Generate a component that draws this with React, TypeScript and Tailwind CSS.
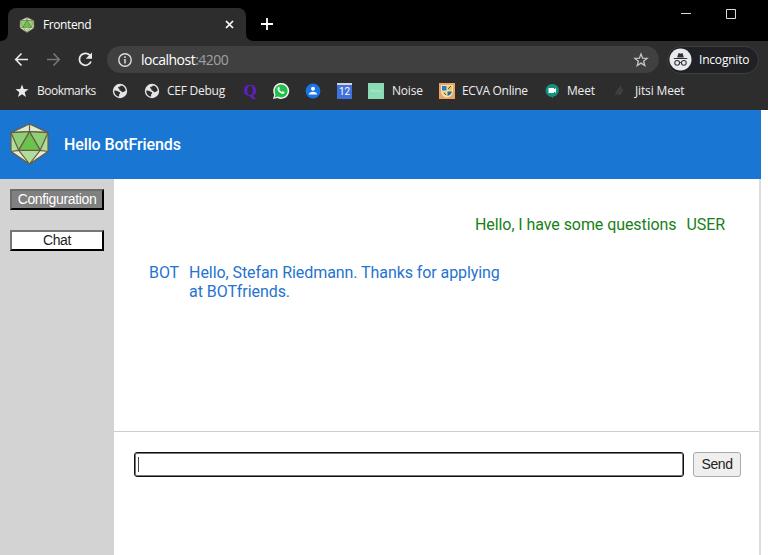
import React from "react";

const Polyhedron = ({ className }: { className: string }) => (
  <svg className={className} viewBox="0 0 39 42" stroke="#6b5b45" strokeWidth="1.2" strokeLinejoin="round">
    <path d="M19.500 1 38 9.700V28.500L19.500 41 1 28.500V9.700Z" fill="#b0de9b" />
    <path d="M19.500 1 38 9.700 19.500 8.700ZM19.500 1 1 9.700 19.500 8.700Z" fill="#dcecd2" />
    <path d="M1 28.500 8.700 27.300 19.500 41ZM38 28.500 30.200 27.300 19.500 41Z" fill="#e0efd8" />
    <path d="M1 9.700 19.500 8.700 8.700 27.300ZM38 9.700 19.500 8.700 30.200 27.300Z" fill="#8fcf77" />
    <path d="M19.500 8.700 30.200 27.300H8.700Z" fill="#6cc24f" />
  </svg>
);

const Globe = () => (
  <svg className="size-4 shrink-0" viewBox="0 0 16 16">
    <circle cx="8" cy="8" r="7.2" fill="#e4e5e7" />
    <path d="M2.300 7.500c1.300 0 3 .1 3.700.8.7.8 2 .4 2.200 1.500.1.900-1.100 1.200-1.100 2v1.800C4.300 13.300 2.100 11 2.300 7.500ZM8.700 2.400c-.1 1-.8 1.300-1.800 1.400-.9.100-1 1.200-.2 1.700.9.500.4 1.700 1.500 2.100 1.300.4 1.300 1.500 2.300 1.600 1.100.1 1.500-1.100 3.100-1.200C13.700 4.900 11.700 2.600 8.700 2.400Z" fill="#2d2d2d" />
  </svg>
);

const Star = () => (
  <svg className="h-4 w-4 shrink-0" viewBox="0 0 16 16">
    <path d="m8 1.600 1.700 4.500 4.800.2-3.800 3 1.300 4.700L8 11.300 4 14l1.300-4.700-3.800-3 4.800-.2Z" fill="#e8eaed" />
  </svg>
);

function TabStrip() {
  return (
    <header className="flex h-[41px] items-start bg-black text-white">
      <div className="flex h-[41px] items-end">
        <svg className="h-2 w-2" viewBox="0 0 8 8"><path d="M8 0v8H0Q8 8 8 0Z" fill="#2d2d2d" /></svg>
        <div className="flex h-[33px] w-[238px] items-center rounded-t-lg bg-[#2d2d2d] pl-[11px] pr-[10px]">
          <Polyhedron className="h-4 w-4" />
          <span className="ml-2 text-[12px] tracking-[-0.4px]">Frontend</span>
          <svg className="ml-auto size-[13px]" viewBox="0 0 13 13"><path d="m3 3 7 7m0-7-7 7" stroke="white" strokeWidth="1.700" /></svg>
        </div>
        <svg className="h-2 w-2" viewBox="0 0 8 8"><path d="M0 0v8h8Q0 8 0 0Z" fill="#2d2d2d" /></svg>
      </div>
      <svg className="ml-[6px] mt-[17px] size-[14px]" viewBox="0 0 14 14"><path d="M7 1v12M1 7h12" stroke="white" strokeWidth="1.800" /></svg>
      <svg className="ml-[406px] mt-2 h-3 w-3" viewBox="0 0 12 12"><path d="M1 5.500h10" stroke="#ddd" /></svg>
      <svg className="ml-[33px] mt-2 h-3 w-3" viewBox="0 0 12 12"><path d="M1.500 1.500h9v9h-9Z" fill="none" stroke="#ddd" /></svg>
    </header>
  );
}

function Toolbar() {
  return (
    <div className="flex h-[37px] items-center pl-3 pr-2">
      <svg className="size-5" viewBox="0 0 20 20"><path d="M16 9.500H4m5.500-6L3.700 9.500l5.800 6" fill="none" stroke="#e8eaed" strokeWidth="1.600" /></svg>
      <svg className="ml-3 size-5" viewBox="0 0 20 20"><path d="M3 9.500h12m-5.500-6 5.800 6-5.800 6" fill="none" stroke="#777" strokeWidth="1.600" /></svg>
      <svg className="ml-[11px] size-5" viewBox="0 0 20 20">
        <path d="M15.300 5.800A6 6 0 1 0 16 11.500" fill="none" stroke="#e8eaed" strokeWidth="1.800" />
        <path d="M17 2.500v6.300h-6.300Z" fill="#e8eaed" />
      </svg>
      <div className="ml-3 flex h-[27px] w-[552px] items-center rounded-full bg-[#404040] pl-[10px] pr-[10px]">
        <svg className="size-4" viewBox="0 0 16 16"><circle cx="8" cy="8" r="6.200" fill="none" stroke="#ddd" strokeWidth="1.400" /><path d="M8 7v4.500M8 4.300v1.600" stroke="#ddd" strokeWidth="1.500" /></svg>
        <span className="ml-[8px] text-[14px] tracking-[-0.5px] text-white">localhost<span className="text-[#9da0a3]">:4200</span></span>
        <svg className="ml-auto size-4" viewBox="0 0 16 16"><path d="m8 2 1.600 4.200 4.500.2-3.500 2.800 1.200 4.300L8 11.100l-3.800 2.400 1.200-4.300-3.500-2.800 4.500-.2Z" fill="none" stroke="#c5c7c9" strokeWidth="1.300" /></svg>
      </div>
      <div className="ml-2 flex h-[28px] w-[92px] items-center rounded-full border border-[#3c3e40] bg-[#202124] pl-px">
        <svg className="size-[23px] shrink-0" viewBox="0 0 24 24">
          <circle cx="12" cy="12" r="11.500" fill="#e8eaed" />
          <path d="M8.500 10 9.800 5.400h1.200l1 .5 1-.5h1.200l1.300 4.600ZM5 10.500h14v1.100H5Z" fill="#303134" />
          <g fill="none" stroke="#303134" strokeWidth="1.100"><circle cx="8.500" cy="15.500" r="2.500" /><circle cx="15.500" cy="15.500" r="2.500" /><path d="M11 15.500q1-.8 2 0" /></g>
        </svg>
        <span className="ml-[7px] text-[12px] tracking-[-0.2px] text-white">Incognito</span>
      </div>
    </div>
  );
}

function Bookmarks() {
  return (
    <nav className="flex h-[32px] items-center pb-[6px] pl-[14px] text-[12px] text-[#eee] [&>span]:shrink-0 [&>span]:whitespace-nowrap [&>svg]:shrink-0">
      <Star />
      <span className="ml-[7px] w-[60px] tracking-[-0.5px]">Bookmarks</span>
      <div className="ml-[15px]"><Globe /></div>
      <div className="ml-4"><Globe /></div>
      <span className="ml-[7px] w-[58px] tracking-[-0.25px]">CEF Debug</span>
      <span className="ml-[17px] w-4 text-center font-['Liberation_Serif',serif] text-[17px] font-bold leading-4 text-[#681bd9]">Q</span>
      <svg className="ml-[14px] size-[18px]" viewBox="0 0 18 18">
        <path d="M1 17 2.200 12.800A8 8 0 1 1 5.300 15.900Z" fill="#f4f4f4" />
        <path d="m2.600 15.400.9-3.200A6.500 6.500 0 1 1 5.900 14.600Z" fill="#20c04b" />
        <path d="M6.200 5.100c.4-.4.9-.3 1.100.2l.6 1.300-.7.900c.7 1.300 1.500 2 2.800 2.600l.8-.9 1.500.8c.4.200.3.700-.1 1.200-1.100 1.200-2.700.7-4.500-.6C5.500 8.900 4.800 6.600 6.200 5.100Z" fill="white" />
      </svg>
      <svg className="ml-[15px] size-4" viewBox="0 0 16 16"><circle cx="8" cy="8" r="7.400" fill="#1a73e8" /><circle cx="8" cy="5.800" r="2" fill="white" /><path d="M3.900 11.600c0-3.800 8.200-3.800 8.200 0Z" fill="white" /></svg>
      <div className="ml-4 h-4 w-[15px] shrink-0 border-t-2 border-[#d4d4d4] bg-[#3f72dc] text-center font-[Roboto,sans-serif] text-[10px] leading-[14px] text-white">12</div>
      <div className="ml-4 flex h-4 w-4 shrink-0 items-center justify-center overflow-hidden bg-[#8bdcb5] text-[4px] text-[#c5eedc]">Noise</div>
      <span className="ml-2 w-[30px] tracking-[-0.2px]">Noise</span>
      <svg className="ml-[17px] size-4" viewBox="0 0 16 16"><path d="M0 0h16v16H0Z" fill="#efa35e" /><path d="M2 2h12v7q-1 5-6 5.500Q3 14 2 9Z" fill="#e8e4c8" /><path d="M3 3h4.500v4.500H3Z" fill="#287cba" /><path d="M8.500 3H13v4.500H8.500Z" fill="#f2c451" /><path d="M3.500 8.500h4V13q-3-1-4-4.500Z" fill="#f3c73f" /><path d="M8.500 8.500H13q-1 3.500-4.500 4.500Z" fill="#286991" /><path d="m9 6 3-3M5 10l2 2" stroke="#555" /></svg>
      <span className="ml-[7px] w-[66px] tracking-[-0.3px]">ECVA Online</span>
      <svg className="ml-4 size-4" viewBox="0 0 16 16"><path d="M8 1a6.300 6.300 0 0 1 1 12.700L8 16v-2A6.500 6.500 0 0 1 8 1Z" fill="#14927d" /><path d="M4.500 5H10v1.500L12 5v5l-2-1.500V10H4.500Z" fill="white" /></svg>
      <span className="ml-[7px] w-[28px] tracking-[-0.2px]">Meet</span>
      <svg className="ml-4 size-4" viewBox="0 0 16 16"><path d="m4 14 .8-5L10 2l.5 3.500L12.500 7 9 12l-4-.5Z" fill="#424242" /><path d="m5 12 5-6" stroke="#333" /></svg>
      <span className="ml-[8px] tracking-[-0.15px]">Jitsi Meet</span>
    </nav>
  );
}

export default function App() {
  return (
    <div className="flex h-[555px] w-[768px] flex-col overflow-hidden bg-white font-['Open_Sans','Noto_Sans',sans-serif]">
      <TabStrip />
      <div className="h-[69px] shrink-0 bg-[#2d2d2d]"><Toolbar /><Bookmarks /></div>
      <div className="flex min-h-0 flex-1">
        <div className="flex w-[761px] flex-col border-r-2 border-[#dedede] font-[Roboto,sans-serif]">
          <header className="-mr-0.5 flex h-[69px] shrink-0 items-center bg-[#1976d2] pl-[10px] text-white">
            <Polyhedron className="mb-px h-[42px] w-[39px]" />
            <h1 className="ml-[15px] text-[16px] font-medium tracking-[-0.12px]">Hello BotFriends</h1>
          </header>
          <div className="flex min-h-0 flex-1">
            <aside className="flex w-[114px] shrink-0 flex-col gap-5 bg-[#d3d3d3] pl-[10px] pr-[10px] pt-[10px] font-['Liberation_Sans',sans-serif] text-[14px] tracking-[-0.35px]">
              <button className="h-[21px] whitespace-nowrap border-2 border-t-[#6b6b6b] border-r-black border-b-black border-l-[#6b6b6b] bg-[#808080] leading-[17px] text-white">Configuration</button>
              <button className="h-[21px] border-2 border-t-[#767676] border-r-black border-b-black border-l-[#767676] bg-white leading-[17px] text-[#222]">Chat</button>
            </aside>
            <main className="flex min-w-0 flex-1 flex-col">
              <section className="h-[253px] border-b border-[#cdcdcd] pl-[35px] pr-[34px] pt-[35.5px] text-[16px] leading-[19px] tracking-[-0.075px]">
                <div className="flex justify-end gap-[10px] text-[#178017]"><p>Hello, I have some questions</p><span>USER</span></div>
                <div className="mt-[29.5px] flex gap-[10px] text-[#2573d0]"><span>BOT</span><p className="w-[323px] leading-[19.4px]">Hello, Stefan Riedmann. Thanks for applying at BOTfriends.</p></div>
              </section>
              <form className="flex gap-[9px] pl-5 pt-5">
                <div className="flex h-[25px] w-[550px] items-center rounded-[3px] border border-[#101010] bg-white pl-[3px] shadow-[inset_0_0_0_1px_#777]"><span className="h-[15px] w-px bg-[#444]" /></div>
                <button className="h-[25px] w-[48px] rounded-[3px] border border-[#aaa] bg-[#efefef] pb-px font-['Liberation_Sans',sans-serif] text-[14px] tracking-[-0.4px] text-[#222]">Send</button>
              </form>
            </main>
          </div>
        </div>
      </div>
    </div>
  );
}
